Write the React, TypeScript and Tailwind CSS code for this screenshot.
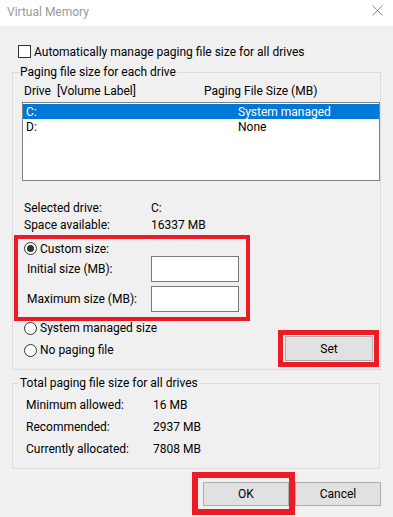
import React from "react";

function Radio({ checked }: { checked?: boolean }) {
  return (
    <span className="w-[13px] h-[13px] shrink-0 rounded-full border border-[#333333] bg-white flex items-center justify-center">
      {checked && <span className="w-[7px] h-[7px] rounded-full bg-[#333333]" />}
    </span>
  );
}

function Btn({ label, w, h }: { label: string; w: string; h: string }) {
  return (
    <div
      className={`${w} ${h} border border-[#adadad] bg-[#e1e1e1] flex items-center justify-center`}
    >
      {label}
    </div>
  );
}

export default function App() {
  return (
    <div className="w-[393px] h-[517px] overflow-hidden bg-[#f0f0f0] font-['Roboto',sans-serif] text-[12px] leading-[16px] text-black">
      {/* Title bar */}
      <div className="h-[26px] bg-white flex items-start justify-between pl-[7px] pr-[10px]">
        <span className="mt-[4px] text-[#999999]">Virtual Memory</span>
        <svg width="11" height="11" viewBox="0 0 11 11" className="mt-[5px]">
          <path d="M0.5 0.5 L10.5 10.5 M10.5 0.5 L0.5 10.5" stroke="#8a8a8a" strokeWidth="1" />
        </svg>
      </div>

      <div className="pl-[12px] pr-[13px]">
        {/* Checkbox */}
        <div className="mt-[19px] h-[13px] flex items-center pl-[6px] gap-[3px]">
          <span className="w-[13px] h-[13px] border border-[#333333] bg-white shrink-0" />
          <span>Automatically manage paging file size for all drives</span>
        </div>

        {/* Group 1 */}
        <fieldset className="mt-[6px] border border-[#dcdcdc]">
          <legend className="ml-[6px] px-[1px] leading-[16px]">Paging file size for each drive</legend>
          <div className="mt-[3px] h-[16px] flex pl-[11px]">
            <span className="w-[180px] whitespace-pre">Drive  [Volume Label]</span>
            <span>Paging File Size (MB)</span>
          </div>
          <div className="mt-[3px] ml-[9px] w-[358px] h-[79px] border border-[#828282] bg-white pt-[1px]">
            <div className="h-[15px] bg-[#0078d7] text-white flex items-center pl-[3px]">
              <span className="w-[212px]">C:</span>
              <span>System managed</span>
            </div>
            <div className="h-[15px] flex items-center pl-[3px]">
              <span className="w-[212px]">D:</span>
              <span>None</span>
            </div>
          </div>

          <div className="mt-[18px] pl-[11px]">
            <div className="h-[17px] flex items-center">
              <span className="w-[127px]">Selected drive:</span>
              <span>C:</span>
            </div>
            <div className="h-[17px] flex items-center">
              <span className="w-[127px]">Space available:</span>
              <span>16337 MB</span>
            </div>
          </div>

          {/* Custom size red box */}
          <div className="mt-[2px] ml-[1px] w-[236px] h-[86px] border-4 border-[#ed1c24]">
            <div className="mt-[2px] h-[15px] flex items-center pl-[6px] gap-[3px]">
              <Radio checked />
              <span>Custom size:</span>
            </div>
            <div className="h-[26px] flex items-center pl-[9px]">
              <span className="w-[124px]">Initial size (MB):</span>
              <span className="w-[88px] h-[26px] border border-[#7a7a7a] bg-white" />
            </div>
            <div className="mt-[4px] h-[26px] flex items-center pl-[9px]">
              <span className="w-[124px]">Maximum size (MB):</span>
              <span className="w-[88px] h-[26px] border border-[#7a7a7a] bg-white" />
            </div>
          </div>

          <div className="flex justify-between pb-[2px]">
            <div className="pl-[11px]">
              <div className="h-[14px] flex items-center gap-[3px]">
                <Radio />
                <span>System managed size</span>
              </div>
              <div className="mt-[8px] h-[14px] flex items-center gap-[3px]">
                <Radio />
                <span>No paging file</span>
              </div>
            </div>
            <div className="mt-[9px] mr-[1px] w-[101px] h-[37px] border-[5px] border-[#ed1c24] pl-[2px] pt-[1px]">
              <Btn label="Set" w="w-[88px]" h="h-[25px]" />
            </div>
          </div>
        </fieldset>

        {/* Group 2 */}
        <fieldset className="mt-[5px] border border-[#dcdcdc]">
          <legend className="ml-[6px] px-[1px] leading-[16px]">Total paging file size for all drives</legend>
          <div className="mt-[3px] pl-[13px] pb-[8px]">
            <div className="h-[22px] flex items-center">
              <span className="w-[127px]">Minimum allowed:</span>
              <span>16 MB</span>
            </div>
            <div className="h-[22px] flex items-center">
              <span className="w-[127px]">Recommended:</span>
              <span>2937 MB</span>
            </div>
            <div className="h-[22px] flex items-center">
              <span className="w-[127px]">Currently allocated:</span>
              <span>7808 MB</span>
            </div>
          </div>
        </fieldset>

        {/* Buttons */}
        <div className="mt-[3px] flex items-start pl-[180px]">
          <div className="w-[106px] h-[43px] border-[6px] border-[#ed1c24] pl-[5px] pt-[4px]">
            <Btn label="OK" w="w-[86px]" h="h-[24px]" />
          </div>
          <div className="mt-[10px]">
            <Btn label="Cancel" w="w-[86px]" h="h-[24px]" />
          </div>
        </div>
      </div>
    </div>
  );
}
